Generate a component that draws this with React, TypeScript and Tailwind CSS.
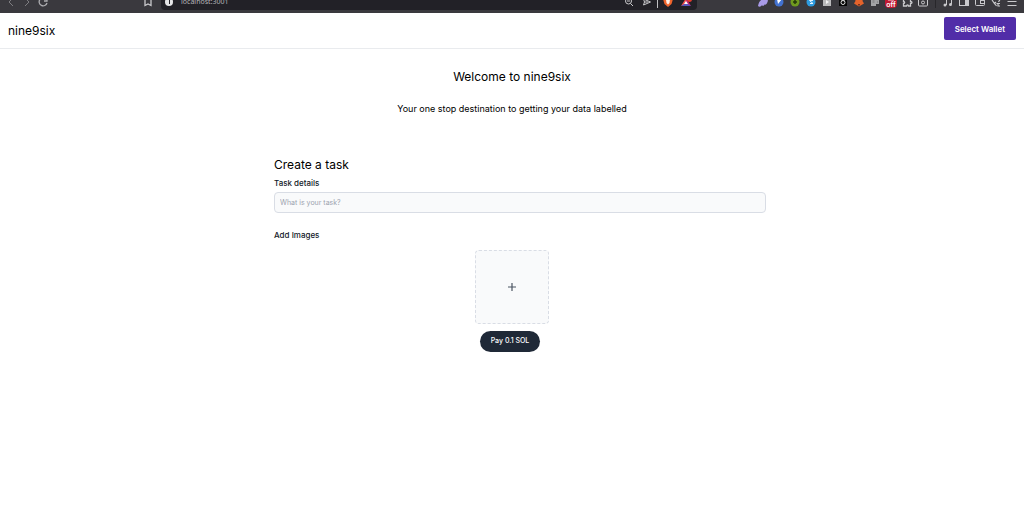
import type { ReactNode } from "react";

const stroke = {
  fill: "none",
  stroke: "currentColor",
  strokeWidth: 1,
} as const;

function Icon({ children }: { children: ReactNode }) {
  return (
    <svg viewBox="0 0 12 12" className="size-3" aria-hidden="true">
      {children}
    </svg>
  );
}

function BarButton({ label, children }: { label: string; children: ReactNode }) {
  return (
    <button
      type="button"
      aria-label={label}
      className="flex w-4 shrink-0 items-center justify-center text-[#c9c9cc]"
    >
      <Icon>{children}</Icon>
    </button>
  );
}

const extensions = [
  {
    label: "Phantom",
    icon: <path fill="#a99be8" d="M1 10C2 5 4 3 8 3c2.500 0 3.500 1 2.500 3C10 8 8.500 9 7.500 8.500 6.500 10.500 5.500 10 5 9c-1 2-3 2-4 1Z" />,
  },
  {
    label: "Shield",
    icon: (
      <>
        <circle cx="6" cy="6" r="4.500" fill="#4272d0" />
        <path fill="#fff" d="M4 3h5L5 8Z" />
      </>
    ),
  },
  {
    label: "Add note",
    icon: (
      <>
        <circle cx="6" cy="6" r="4.500" fill="#6f9a1e" />
        <path d="M6 4v4M4 6h4" stroke="#26380a" strokeWidth="1.500" />
      </>
    ),
  },
  {
    label: "Search helper",
    icon: (
      <>
        <circle cx="6" cy="6" r="4.500" fill="#2d9be0" />
        <path d="M8 4.500H4.500L8 7.500H5" fill="none" stroke="#e6f5ff" />
      </>
    ),
  },
  {
    label: "Player",
    icon: (
      <>
        <rect x="2" y="2" width="8" height="8" fill="#b9b9bb" />
        <path d="m5 4 3 2-3 2Z" fill="#f5f5f5" />
      </>
    ),
  },
  {
    label: "Daily dev",
    icon: (
      <>
        <rect x="2" y="2" width="8" height="8" fill="#050505" />
        <circle cx="6" cy="6.500" r="2" fill="none" stroke="#ddd" />
        <path d="M4 4h4" stroke="#ddd" />
      </>
    ),
  },
  {
    label: "MetaMask",
    icon: (
      <>
        <path fill="#e5632b" d="m2 2 2 1.500h4L10 2l-.5 3L11 7.500 8.500 9 6 10.500 3.500 9 1 7.500 2.500 5Z" />
        <path fill="#7a321a" d="M5 8h2v1.500H5Z" />
      </>
    ),
  },
  {
    label: "Translate",
    icon: (
      <>
        <path fill="#a3a3a6" d="M2 2h5v8H2ZM7 3h3v5H7Z" />
        <path d="M3.500 4h2M3.500 6h2M8 6h1" stroke="#777" />
      </>
    ),
  },
  {
    label: "Blocker off",
    icon: (
      <>
        <rect y="0" width="12" height="12" rx="4" fill="#c01832" />
        <path d="M3 4h6" stroke="#f5d7dc" strokeWidth="1" />
        <text x="6" y="11" textAnchor="middle" fontSize="7" fontWeight="600" fill="#fff">
          off
        </text>
      </>
    ),
  },
  {
    label: "Extensions",
    icon: <path {...stroke} strokeWidth="1.300" d="M2.500 3H5c-.5-2 2.500-2 2 0h2.500v2.500c2 0 2 2 0 2V10H7.500c0-1.500-2-1.500-2 0h-3V7.500c1.500 0 1.500-2 0-2Z" />,
  },
  {
    label: "Downloads",
    icon: (
      <>
        <rect {...stroke} x="1.500" y="2" width="9" height="8" rx="1" />
        <circle {...stroke} cx="6" cy="6.500" r="1.500" />
      </>
    ),
  },
];

const tools = [
  {
    label: "Media",
    icon: (
      <>
        <path {...stroke} d="M4.500 9V3M9.500 8V1" />
        <circle cx="3" cy="9" r="1.500" fill="currentColor" />
        <circle cx="8.500" cy="8.500" r="1.500" fill="currentColor" />
      </>
    ),
  },
  {
    label: "Sidebar",
    icon: (
      <>
        <rect {...stroke} x="1.500" y="1.500" width="9" height="8" />
        <path d="M7 1.500h3.500v8H7Z" fill="currentColor" />
      </>
    ),
  },
  {
    label: "Wallet",
    icon: (
      <>
        <rect {...stroke} x="1.500" y="1.500" width="9" height="8" rx="1" />
        <rect {...stroke} x="6.500" y="4.500" width="4" height="3" />
      </>
    ),
  },
  {
    label: "Leo AI",
    icon: <path {...stroke} strokeWidth="1.200" d="M2 3.500h3L6 2l1 1.500h3L8.500 6M2 4l2.500 3.500L6 6M6.500 7.500H10M8 7.500V10h2M5 8l1.500 2" />,
  },
  {
    label: "Menu",
    icon: <path {...stroke} d="M1.500 2.500h9M1.500 5.500h9M1.500 9.500h9" />,
  },
];

function BrowserBar() {
  return (
    <div className="flex h-[13px] items-end overflow-hidden bg-[#3a393e]">
      <div className="flex h-[22px] w-full shrink-0 items-center">
        <div className="flex w-[161px] shrink-0 items-center justify-between pr-[5px] pl-[3px]">
          <div className="flex opacity-80">
            <BarButton label="Back">
              <path {...stroke} d="M8 2 4 6l4 4" opacity="0.6" />
            </BarButton>
            <BarButton label="Forward">
              <path {...stroke} d="m4 2 4 4-4 4" opacity="0.6" />
            </BarButton>
            <BarButton label="Reload">
              <path {...stroke} strokeWidth="1.300" d="M9 3a4 4 0 1 0 1 4M10 2v3H7" />
            </BarButton>
          </div>
          <BarButton label="Bookmark">
            <path {...stroke} strokeWidth="1.300" d="M3 1.500h6v8L6 8l-3 1.500Z" />
          </BarButton>
        </div>

        <div className="flex h-4 flex-1 items-center rounded-sm bg-[#222127] pr-[3px] pl-1">
          <span className="flex size-2 shrink-0 items-center justify-center rounded-full bg-[#e4e4e6]">
            <span className="h-1 w-px bg-[#222127]" />
          </span>
          <span className="flex-1 pl-2 font-['Noto_Sans',sans-serif] text-[7px] leading-4 text-[#b5b5b9]">
            localhost:3001
          </span>
          <div className="flex items-center gap-0.5">
            <BarButton label="Zoom">
              <circle {...stroke} cx="5.500" cy="5" r="3" />
              <path {...stroke} d="m7.500 7.500 2.500 2.500M4 5h3" />
            </BarButton>
            <BarButton label="Share">
              <path {...stroke} d="m2.500 3 7 3-7 3 1-3ZM3.500 6H7" />
            </BarButton>
            <span className="h-3 w-px bg-[#c0c0c4]" />
            <BarButton label="Brave Shields">
              <path fill="#f0642c" d="M3 1h6l2 2-1.500 5L6 11 2.500 8 1 3Z" />
              <path fill="#fff0e8" d="M4 3.500h4L7.500 7 6 8.500 4.500 7Z" />
            </BarButton>
            <BarButton label="Brave Rewards">
              <path fill="#f04f4b" d="M6 2v6L1 10Z" />
              <path fill="#c32478" d="m6 2 5 8-5-2Z" />
              <path fill="#5657bb" d="m6 7 5 3H1Z" />
              <path fill="#fff" d="m6 5 2 3H4Z" />
              <circle cx="9.500" cy="3.500" r="2.500" fill="#e63b2e" />
            </BarButton>
          </div>
        </div>

        <div className="flex w-[327px] shrink-0 items-center justify-end pr-1">
          {extensions.map((item) => (
            <BarButton key={item.label} label={item.label}>
              {item.icon}
            </BarButton>
          ))}
          <span className="mx-1 h-3 w-px bg-[#28272b]" />
          {tools.map((item) => (
            <BarButton key={item.label} label={item.label}>
              {item.icon}
            </BarButton>
          ))}
        </div>
      </div>
    </div>
  );
}

function Appbar() {
  return (
    <header className="flex items-start justify-between border-b border-[#e9ebee] pt-1 pr-2 pb-[7px] pl-2">
      <div className="pt-1 text-[12px] leading-5">nine9six</div>
      <button
        type="button"
        className="h-[23px] rounded-[2px] bg-[#512da8] px-[11px] text-[8px] font-semibold text-white"
      >
        Select Wallet
      </button>
    </header>
  );
}

function Hero() {
  return (
    <section className="pt-[18px] text-center">
      <h1 className="text-[12px] leading-5">Welcome to nine9six</h1>
      <p className="pt-3 text-[9px] leading-5">
        Your one stop destination to getting your data labelled
      </p>
    </section>
  );
}

function Upload() {
  return (
    <main className="mx-auto w-full max-w-[508px] pt-9">
      <form className="flex flex-col">
        <div className="pl-4">
          <h2 className="text-[12px] leading-5">Create a task</h2>
          <label
            htmlFor="task"
            className="block text-[8px] leading-4 font-medium text-[#111827]"
          >
            Task details
          </label>
          <input
            id="task"
            type="text"
            placeholder="What is your task?"
            className="mt-px block h-[21px] w-full rounded border border-[#d9dde5] bg-[#f9fafb] px-[5px] text-[7px] text-[#111827] placeholder:text-[#9ca3af]"
          />
          <label
            htmlFor="images"
            className="mt-[14px] block text-[8px] leading-4 font-medium text-[#111827]"
          >
            Add Images
          </label>
        </div>

        <label
          htmlFor="images"
          className="mx-auto mt-[7px] flex size-[74px] cursor-pointer items-center justify-center rounded border border-dashed border-[#d9dde5] bg-[#f9fafb] text-[#4b5563]"
        >
          <svg viewBox="0 0 10 10" className="size-[10px]" aria-hidden="true">
            <path d="M5 1v8M1 5h8" stroke="currentColor" strokeWidth="1.200" />
          </svg>
          <input id="images" type="file" className="sr-only" />
        </label>

        <div className="flex justify-center pt-[7px] pr-1">
          <button
            type="button"
            className="h-[21px] rounded-full bg-[#1f2937] px-[11px] text-[7px] font-medium text-white"
          >
            Pay 0.1 SOL
          </button>
        </div>
      </form>
    </main>
  );
}

export default function App() {
  return (
    <div className="min-h-screen bg-white font-['Inter',sans-serif] text-black">
      <BrowserBar />
      <Appbar />
      <Hero />
      <Upload />
    </div>
  );
}
